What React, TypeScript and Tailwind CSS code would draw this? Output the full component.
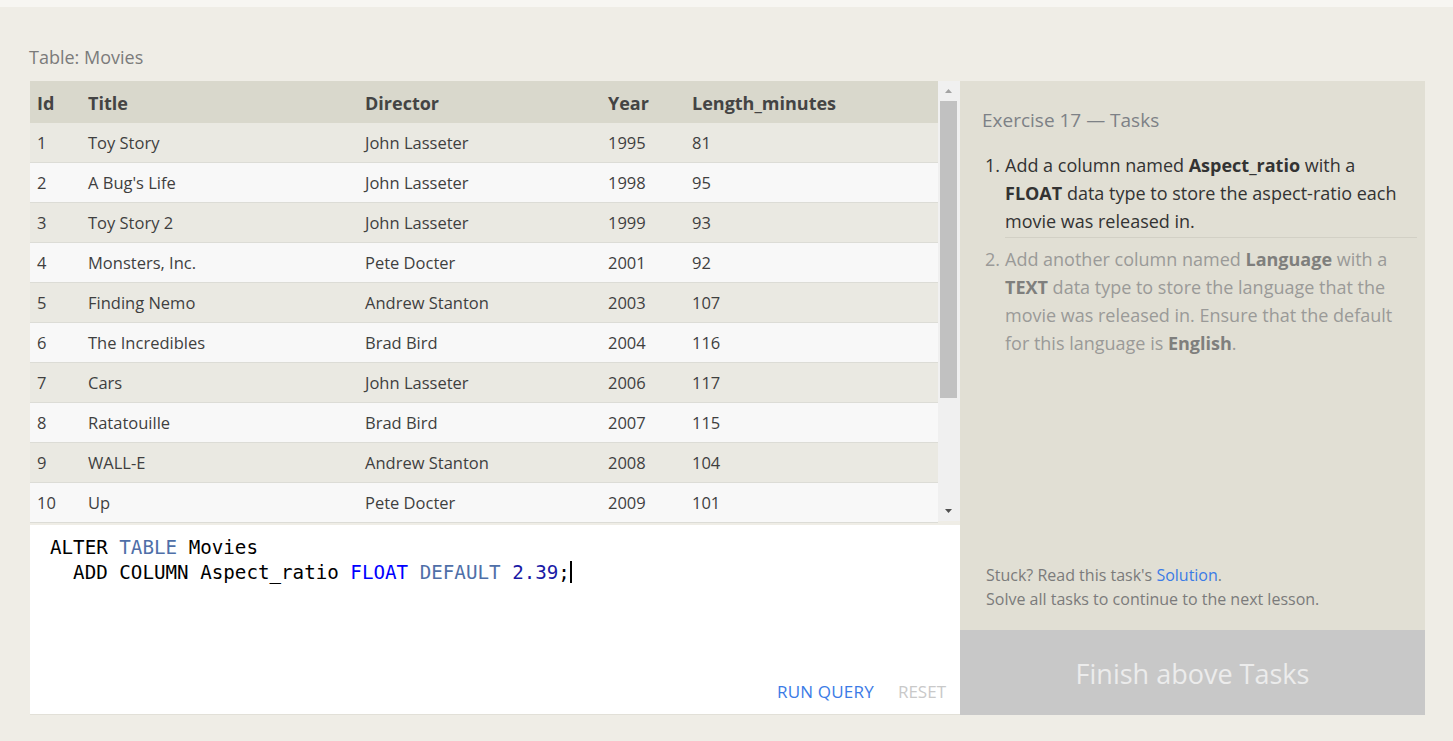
import React from 'react';

type Movie = { id: number; title: string; director: string; year: number; length: number };

const movies: Movie[] = [
  { id: 1, title: 'Toy Story', director: 'John Lasseter', year: 1995, length: 81 },
  { id: 2, title: "A Bug's Life", director: 'John Lasseter', year: 1998, length: 95 },
  { id: 3, title: 'Toy Story 2', director: 'John Lasseter', year: 1999, length: 93 },
  { id: 4, title: 'Monsters, Inc.', director: 'Pete Docter', year: 2001, length: 92 },
  { id: 5, title: 'Finding Nemo', director: 'Andrew Stanton', year: 2003, length: 107 },
  { id: 6, title: 'The Incredibles', director: 'Brad Bird', year: 2004, length: 116 },
  { id: 7, title: 'Cars', director: 'John Lasseter', year: 2006, length: 117 },
  { id: 8, title: 'Ratatouille', director: 'Brad Bird', year: 2007, length: 115 },
  { id: 9, title: 'WALL-E', director: 'Andrew Stanton', year: 2008, length: 104 },
  { id: 10, title: 'Up', director: 'Pete Docter', year: 2009, length: 101 },
];

const cols = 'grid grid-cols-[51px_277px_243px_84px_1fr]';

const App: React.FC = () => {
  return (
    <div
      className="min-h-[741px] bg-[#efede6] text-[#444]"
      style={{ fontFamily: '"Open Sans", "Noto Sans", sans-serif' }}
    >
      {/* top strip */}
      <div className="h-[7px] bg-[#f7f6f2]" />

      <div className="px-[29px] pt-[38px]">
        <div className="text-[18px] leading-[24px] text-[#7b7b7b] mb-[12px]">Table: Movies</div>

        <div className="flex w-[1396px] h-[634px]">
          {/* left column: table + editor */}
          <div className="flex flex-col w-[930px] ml-px">
            <div className="flex h-[440px] bg-[#f0f0f0]">
              <div className="w-[908px]">
                <div className={`${cols} h-[42px] items-center pt-[3px] bg-[#d9d8cc] font-bold text-[18px] text-[#444]`}>
                  <div className="pl-[7px]">Id</div>
                  <div className="pl-[7px]">Title</div>
                  <div className="pl-[7px]">Director</div>
                  <div className="pl-[7px]">Year</div>
                  <div className="pl-[7px]">Length_minutes</div>
                </div>
                {movies.map((m, i) => (
                  <div
                    key={m.id}
                    className={`${cols} h-[40px] items-center pt-[2px] border-b border-[#dcdcd6] text-[16.5px] text-[#3f3f3f] ${
                      i % 2 === 0 ? 'bg-[#eae9e2]' : 'bg-[#f8f8f8]'
                    }`}
                  >
                    <div className="pl-[7px]">{m.id}</div>
                    <div className="pl-[7px]">{m.title}</div>
                    <div className="pl-[7px]">{m.director}</div>
                    <div className="pl-[7px]">{m.year}</div>
                    <div className="pl-[7px]">{m.length}</div>
                  </div>
                ))}
              </div>
              {/* scrollbar */}
              <div className="w-[20px] flex flex-col items-center">
                <div className="h-[20px] flex items-center justify-center">
                  <svg width="9" height="6" viewBox="0 0 9 6">
                    <path d="M4.5 1 L8 5 L1 5 Z" fill="#a3a3a3" />
                  </svg>
                </div>
                <div className="w-[17px] h-[297px] bg-[#c1c1c1]" />
                <div className="flex-1" />
                <div className="h-[20px] flex items-center justify-center">
                  <svg width="9" height="6" viewBox="0 0 9 6">
                    <path d="M1 1 L8 1 L4.5 5 Z" fill="#505050" />
                  </svg>
                </div>
              </div>
            </div>

            {/* editor */}
            <div className="mt-[4px] flex-1 bg-white flex flex-col border-b border-[#e2e0d8]">
              <div
                className="pl-[20px] pt-[10px] text-[19.2px] leading-[25px] text-black whitespace-pre"
                style={{ fontFamily: '"DejaVu Sans Mono", "Liberation Mono", monospace' }}
              >
                <div>
                  ALTER <span className="text-[#4f6fa8]">TABLE</span> Movies
                </div>
                <div>
                  {'  '}ADD COLUMN Aspect_ratio <span className="text-[#0000ff]">FLOAT</span>{' '}
                  <span className="text-[#4f6fa8]">DEFAULT</span>{' '}
                  <span className="text-[#1a1aa6]">2.39</span>;
                  <span className="inline-block w-[2px] h-[22px] bg-black align-[-4px]" />
                </div>
              </div>
              <div className="flex-1" />
              <div className="flex justify-end items-center gap-[24px] pr-[14px] pb-[10px] text-[17px]">
                <span className="text-[#3b7be6] tracking-[0.2px]">RUN QUERY</span>
                <span className="text-[#c9c9c9]">RESET</span>
              </div>
            </div>
          </div>

          {/* right column: tasks */}
          <div className="w-[465px] flex flex-col bg-[#e1dfd4]">
            <div className="flex-1 flex flex-col pl-[22px] pr-[8px] pt-[26px]">
              <div className="text-[19px] leading-[26px] text-[#7d8186]">Exercise 17 — Tasks</div>
              <ol className="mt-[18px] text-[18px] leading-[28px]">
                <li className="flex text-[#333]">
                  <span className="w-[23px] pl-[3px] shrink-0">1.</span>
                  <div className="pb-[2px] border-b border-[#d2d0c5]">
                    Add a column named <b>Aspect_ratio</b> with a <b>FLOAT</b> data type to store the aspect-ratio each
                    movie was released in.
                  </div>
                </li>
                <li className="flex text-[#9a9a98] mt-[7px]">
                  <span className="w-[23px] pl-[3px] shrink-0">2.</span>
                  <div>
                    Add another column named <b className="text-[#7f7f7d]">Language</b> with a{' '}
                    <b className="text-[#7f7f7d]">TEXT</b> data type to store the language that the movie was released in.
                    Ensure that the default for this language is <b className="text-[#7f7f7d]">English</b>.
                  </div>
                </li>
              </ol>
              <div className="flex-1" />
              <div className="pl-[4px] pb-[19px] text-[16px] leading-[24px] text-[#7b7b7b]">
                <div>
                  Stuck? Read this task's <span className="text-[#3b7be6]">Solution</span>.
                </div>
                <div>Solve all tasks to continue to the next lesson.</div>
              </div>
            </div>
            <div className="h-[85px] pt-[4px] bg-[#c8c8c8] flex items-center justify-center text-[27px] text-[#ececec]">
              Finish above Tasks
            </div>
          </div>
        </div>
      </div>
    </div>
  );
};

export default App;
